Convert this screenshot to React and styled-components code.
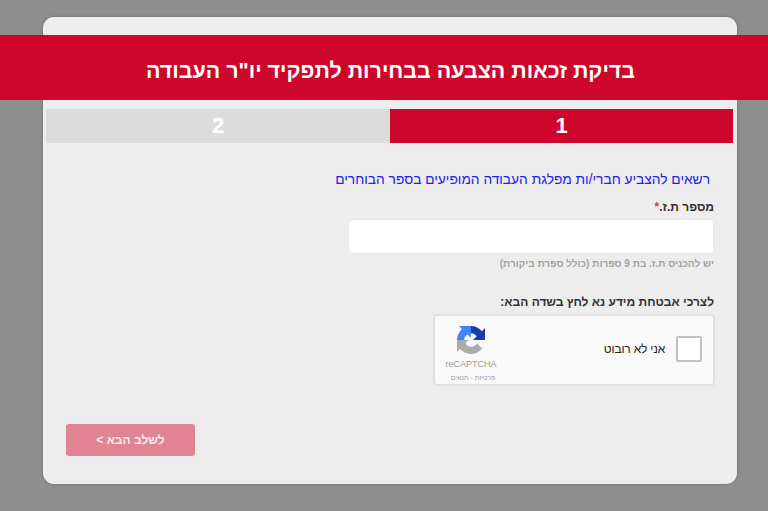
import React from "react";
import styled, { createGlobalStyle } from "styled-components";

const GlobalStyle = createGlobalStyle`
  html, body {
    margin: 0;
    padding: 0;
    height: 511px;
    overflow: hidden;
    background: #8e8e8e;
    font-family: "Liberation Sans", Arial, sans-serif;
  }
`;

const StyledPage = styled.div`
  box-sizing: border-box;
  height: 511px;
  overflow: hidden;
  padding: 17px 31px 27px 43px;
`;

const StyledCard = styled.div`
  background: #ededed;
  border-radius: 11px;
  box-shadow: 0 0 3px rgba(0, 0, 0, 0.25);
  box-sizing: border-box;
  direction: rtl;
  display: flex;
  flex-direction: column;
  height: 467px;
  padding-top: 18px;
`;

const StyledBanner = styled.h1`
  align-items: center;
  background: #ce062c;
  box-sizing: border-box;
  color: #fff;
  display: flex;
  font-size: 21.45px;
  font-weight: 700;
  height: 65px;
  justify-content: center;
  margin: 0 -31px 0 -43px;
  padding: 8px 0 0 13px;
`;

const StyledSteps = styled.div`
  display: grid;
  grid-template-columns: 343px 344px;
  margin: 9px 4px 0 3px;
`;

const StyledStep = styled.div`
  align-items: center;
  background: ${props => props.active ? "#ce062c" : "#dcdcdc"};
  color: #fff;
  display: flex;
  font-size: 22px;
  font-weight: 700;
  height: 34px;
  justify-content: center;
`;

const StyledForm = styled.div`
  display: flex;
  flex-direction: column;
  flex: 1;
  padding: 28px 23px 28px 23px;
`;

const StyledNotice = styled.div`
  color: #2020f0;
  font-size: 13.75px;
  line-height: 17px;
  padding-right: 4px;
`;

const StyledLabel = styled.label`
  color: #333;
  font-size: 12px;
  font-weight: 700;
  line-height: 14px;
  margin-top: 12px;
`;

const StyledRequired = styled.span`
  color: #e0393e;
`;

const StyledInput = styled.input`
  background: #fff;
  border: 1px solid #e8e8e8;
  border-radius: 4px;
  box-sizing: border-box;
  height: 35px;
  margin-top: 5px;
  width: 366px;
`;

const StyledHint = styled.div`
  color: #a3a3a3;
  font-size: 10px;
  font-weight: 700;
  line-height: 14px;
  margin-top: 3px;
`;

const StyledSecurityLabel = styled(StyledLabel)`
  margin-top: 24px;
`;

const StyledCaptcha = styled.div`
  align-items: center;
  background: #f9f9f9;
  border: 1px solid #dcdcdc;
  border-radius: 3px;
  box-shadow: 0 0 3px rgba(0, 0, 0, 0.1);
  box-sizing: border-box;
  display: flex;
  height: 70px;
  margin-top: 6px;
  padding: 0 11px;
  width: 280px;
`;

const StyledCheckbox = styled.div`
  background: #fff;
  border: 2px solid #c1c1c1;
  border-radius: 2px;
  box-sizing: border-box;
  height: 26px;
  margin-bottom: 3px;
  width: 26px;
`;

const StyledCaptchaText = styled.div`
  color: #222;
  flex: 1;
  font-size: 12px;
  letter-spacing: -0.2px;
  margin: 0 11px 3px 0;
`;

const StyledCaptchaBrand = styled.div`
  align-items: center;
  color: #9b9b9b;
  display: flex;
  flex-direction: column;
  margin-top: 8px;
  width: 50px;
`;

const StyledBrandName = styled.div`
  direction: ltr;
  font-size: 9px;
  line-height: 10px;
  margin-top: 5px;
`;

const StyledBrandLinks = styled.div`
  font-size: 6.8px;
  line-height: 8px;
  margin: 5px 0 0 4px;
`;

const StyledFooter = styled.div`
  display: flex;
  justify-content: flex-end;
  margin-top: auto;
`;

const StyledNextButton = styled.button`
  background: #e28394;
  border: 0;
  border-radius: 3px;
  color: #f8eef0;
  direction: rtl;
  font-family: inherit;
  font-size: 12px;
  font-weight: 700;
  height: 32px;
  width: 129px;
`;

const RecaptchaLogo = () => (
  <svg width="28" height="28" viewBox="0 0 64 64">
    <path fill="#1c3aa9" d="M64 31.955l-.033-1.37V4.687l-7.16 7.16C50.948 4.674 42.033.093 32.05.093c-10.4 0-19.622 4.96-25.458 12.64l11.736 11.86a15.55 15.55 0 0 1 4.754-5.334c2.05-1.6 4.952-2.906 8.968-2.906.485 0 .86.057 1.135.163 4.976.393 9.288 3.14 11.828 7.124l-8.307 8.307L64 31.953" />
    <path fill="#4285f4" d="M31.862 0l-1.37.033H4.594l7.16 7.16C4.58 13.052 0 21.967 0 31.95c0 10.4 4.96 19.622 12.64 25.458L24.5 45.672a15.55 15.55 0 0 1-5.334-4.754c-1.6-2.05-2.906-4.952-2.906-8.968 0-.485.057-.86.163-1.135.393-4.976 3.14-9.288 7.124-11.828l8.307 8.307L31.86 0" />
    <path fill="#ababab" d="M0 31.95l.033 1.37v25.898l7.16-7.16c5.86 7.173 14.775 11.754 24.757 11.754 10.4 0 19.622-4.96 25.458-12.64L45.672 39.313a15.55 15.55 0 0 1-4.754 5.334c-2.05 1.6-4.952 2.906-8.968 2.906-.485 0-.86-.057-1.135-.163-4.976-.393-9.288-3.14-11.828-7.124l8.307-8.307L0 31.95" />
  </svg>
);

const App = () => {
  return (
    <StyledPage>
      <GlobalStyle />
      <StyledCard>
        <StyledBanner>בדיקת זכאות הצבעה בבחירות לתפקיד יו"ר העבודה</StyledBanner>
        <StyledSteps>
          <StyledStep active>1</StyledStep>
          <StyledStep>2</StyledStep>
        </StyledSteps>
        <StyledForm>
          <StyledNotice>רשאים להצביע חברי/ות מפלגת העבודה המופיעים בספר הבוחרים</StyledNotice>
          <StyledLabel>מספר ת.ז.<StyledRequired>*</StyledRequired></StyledLabel>
          <StyledInput type="text" />
          <StyledHint>יש להכניס ת.ז. בת 9 ספרות (כולל ספרת ביקורת)</StyledHint>
          <StyledSecurityLabel>לצרכי אבטחת מידע נא לחץ בשדה הבא:</StyledSecurityLabel>
          <StyledCaptcha>
            <StyledCheckbox />
            <StyledCaptchaText>אני לא רובוט</StyledCaptchaText>
            <StyledCaptchaBrand>
              <RecaptchaLogo />
              <StyledBrandName>reCAPTCHA</StyledBrandName>
              <StyledBrandLinks>פרטיות - תנאים</StyledBrandLinks>
            </StyledCaptchaBrand>
          </StyledCaptcha>
          <StyledFooter>
            <StyledNextButton>לשלב הבא &gt;</StyledNextButton>
          </StyledFooter>
        </StyledForm>
      </StyledCard>
    </StyledPage>
  );
};

export default App;
